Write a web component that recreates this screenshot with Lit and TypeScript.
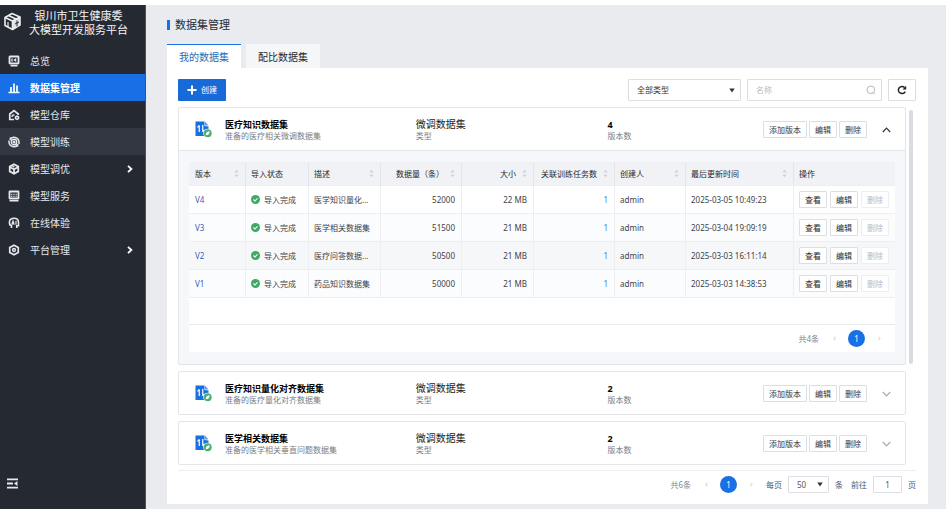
import { LitElement, html, css, svg, nothing, TemplateResult } from "lit";
import { customElement, property, state } from "lit/decorators.js";
import { classMap } from "lit/directives/class-map.js";

const base = css`
  *,
  *::before,
  *::after {
    box-sizing: border-box;
  }
  button,
  input,
  select {
    font: inherit;
    color: inherit;
    margin: 0;
  }
  svg {
    display: block;
    flex: none;
  }
  a {
    text-decoration: none;
  }
`;

const glyph = (body: TemplateResult, size = 12, box = 24) => html`
  <svg width=${size} height=${size} viewBox="0 0 ${box} ${box}" fill="none" stroke="currentColor" stroke-width="2.6" aria-hidden="true">${body}</svg>
`;

const navIcons: Record<string, TemplateResult> = {
  overview: svg`<rect x="3" y="3" width="18" height="14" rx="1" stroke-width="3.600"/><path d="M8 7v6.500" stroke-width="2.600"/><path d="M16.500 6v8L10.500 10z" fill="currentColor" stroke="none"/><path d="M5 21.500h14" stroke-width="3"/>`,
  data: svg`<path d="M6 20V10M12 20V3M18 20V7" stroke-width="3.400"/><path d="M1 21h22" stroke-width="3"/>`,
  store: svg`<path d="M12 21H3.500V10L12 3l8.500 7v2" stroke-width="3.400"/><path d="M8 16c0-3.500 3-5 5-3.500" stroke-width="2.800"/><path d="M18 12.500l4.500 2.500v5L18 22.500 13.500 20v-5z" fill="currentColor" stroke="none"/><circle cx="18" cy="17.500" r="1.300" fill="#252932" stroke="none"/>`,
  train: svg`<path d="M3.500 7.500A10 10 0 0 1 22 12v4M20.500 16.500A10 10 0 0 1 2 12V9" stroke-width="3"/><circle cx="12" cy="12" r="5.500" stroke-width="2.600"/><circle cx="12" cy="12" r="1.800" fill="currentColor"/><path d="M4 3l3 5.500M20 21l-3-5.500" stroke-width="2.600"/>`,
  tune: svg`<path d="M12 2.500l8.500 4.700v9.600L12 21.500l-8.500-4.700V7.200z" stroke-width="3.600"/><path d="M4 8.500l8 4.200 8-4.200M12 12.500V21" stroke-width="3.600"/><path d="M8.500 5l4 3.500" stroke-width="2.600"/>`,
  serve: svg`<rect x="3" y="3" width="18" height="14" rx="0.500" stroke-width="3.600"/><path d="M6 8.500h12M6 12.500h12" stroke-width="2.400" stroke-dasharray="3 1.500"/><path d="M3 21.500h18" stroke-width="3"/>`,
  chat: svg`<path d="M7 22v-4.500c-3.500-1-4.500-4.500-4-8C3.500 5 7 2.500 12 2.500S21 5.500 21 11v6.500h-3.500V22" stroke-width="3.200"/><path d="M7.500 15.500L10 8l2.500 7.500M8.500 13.500h3M16 7.500v8" stroke-width="2.400"/>`,
  admin: svg`<path d="M12 2.500l8.500 4.700v9.600L12 21.500l-8.500-4.700V7.200z" stroke-width="3.400"/><circle cx="12" cy="12" r="2.800" stroke-width="3"/>`,
};

const arrowDown = html`<svg class="caret" width="6" height="5" viewBox="0 0 6 5" aria-hidden="true"><path d="M0.300 0.500h5.400L3 4.500z" fill="#333"/></svg>`;

interface NavItem {
  icon: string;
  label: string;
  active?: boolean;
  hover?: boolean;
  sub?: boolean;
}

@customElement("side-nav")
class SideNav extends LitElement {
  static styles = [
    base,
    css`
      :host {
        display: flex;
        flex-direction: column;
        width: 146px;
        flex: none;
        background: #252932;
        color: #e6e8eb;
        border-right: 1px solid #4b5059;
      }
      .brand {
        display: flex;
        align-items: flex-start;
        gap: 8px;
        height: 42px;
        padding: 4px 4px 0;
        font-size: 11px;
        line-height: 14px;
        color: #f4f5f7;
      }
      .brand svg {
        margin-top: 3px;
      }
      .name {
        text-align: center;
        white-space: nowrap;
      }
      .item {
        display: flex;
        align-items: center;
        gap: 10px;
        height: 27px;
        padding: 0 12px 0 8px;
        font-size: 10px;
        color: inherit;
        white-space: nowrap;
      }
      .label {
        flex: 1;
      }
      .active {
        background: #186fe6;
        color: #fff;
        font-weight: 700;
      }
      .hover {
        background: #323741;
      }
      .fold {
        margin-top: auto;
        margin-bottom: 20px;
        padding: 0 7px;
        border: 0;
        background: none;
        align-self: flex-start;
        color: #e6e8eb;
      }
    `,
  ];

  private items: NavItem[] = [
    { icon: "overview", label: "总览" },
    { icon: "data", label: "数据集管理", active: true },
    { icon: "store", label: "模型仓库" },
    { icon: "train", label: "模型训练", hover: true },
    { icon: "tune", label: "模型调优", sub: true },
    { icon: "serve", label: "模型服务" },
    { icon: "chat", label: "在线体验" },
    { icon: "admin", label: "平台管理", sub: true },
  ];

  render() {
    return html`
      <div class="brand">
        <svg width="17" height="19" viewBox="0 0 34 38" fill="none" stroke="#eceef0" stroke-width="3.200" stroke-linejoin="round" aria-hidden="true">
          <path d="M17 18l15-7v15l-15 10z" fill="#dfe2e5" stroke="none" />
          <path d="M2 11L16 3l16 7v16l-15 9L2 27z" />
          <path d="M2 11l15 7 15-8M17 18v17M9 7l15 7" />
          <path d="M22 24l8-4M26 17v12" stroke="#252932" stroke-width="2" />
          <path d="M8 20v10" stroke-width="2.400" />
        </svg>
        <div class="name">银川市卫生健康委<br />大模型开发服务平台</div>
      </div>
      <nav>
        ${this.items.map(
          (i) => html`<a href="#" class=${classMap({ item: true, active: !!i.active, hover: !!i.hover })}>
            ${glyph(navIcons[i.icon])}
            <span class="label">${i.label}</span>
            ${i.sub
              ? html`<svg width="6" height="8" viewBox="0 0 6 8" fill="none" stroke="#fff" stroke-width="1.800" aria-hidden="true"><path d="M1 0.800L4.400 4 1 7.200" /></svg>`
              : nothing}
          </a>`
        )}
      </nav>
      <button class="fold" aria-label="收起菜单">
        <svg width="11" height="11" viewBox="0 0 11 11" stroke="currentColor" stroke-width="1.800" aria-hidden="true">
          <path d="M0 1.300h11M0 5.500h6M0 9.700h11" /><path d="M10.500 3v5L7 5.500z" fill="currentColor" stroke="none" />
        </svg>
      </button>
    `;
  }
}

@customElement("page-turner")
class PageTurner extends LitElement {
  @property({ type: Number }) total = 0;

  static styles = [
    base,
    css`
      :host {
        display: flex;
        align-items: center;
        color: #85888e;
      }
      .turn {
        width: 14px;
        height: 16px;
        padding: 0;
        border: 0;
        background: none;
        display: grid;
        place-items: center;
        color: #c3c6cb;
      }
      .total {
        margin-right: 8px;
      }
      .page {
        width: 17px;
        height: 17px;
        margin: 0 7px;
        padding: 0;
        border: 0;
        border-radius: 50%;
        background: #186fe6;
        color: #fff;
      }
    `,
  ];

  render() {
    return html`
      <span class="total">共${this.total}条</span>
      <button class="turn" aria-label="上一页" disabled>
        <svg width="3" height="5" viewBox="0 0 3 5" fill="none" stroke="currentColor"><path d="M2.500 0.800L1 2.500l1.500 1.700" /></svg>
      </button>
      <button class="page">1</button>
      <button class="turn" aria-label="下一页" disabled>
        <svg width="3" height="5" viewBox="0 0 3 5" fill="none" stroke="currentColor"><path d="M0.500 0.800L2 2.500 0.500 4.200" /></svg>
      </button>
    `;
  }
}

interface Version {
  name: string;
  desc: string;
  rows: number;
  size: string;
  time: string;
}

@customElement("version-table")
class VersionTable extends LitElement {
  @property({ attribute: false }) versions: Version[] = [];

  static styles = [
    base,
    css`
      :host {
        display: block;
        padding: 11px 10px 12px;
        background: #f5f7fa;
      }
      table {
        width: 100%;
        table-layout: fixed;
        border-collapse: separate;
        border-spacing: 0;
        background: #fff;
      }
      th,
      td {
        padding: 0 6px 0 5px;
        text-align: left;
        white-space: nowrap;
        font-weight: 400;
        border-left: 1px solid #eceef1;
        border-bottom: 1px solid #eceef2;
        color: #404349;
      }
      th {
        height: 24px;
        background: #f1f2f5;
        color: #26292f;
        border-left-color: #e4e6ea;
      }
      td {
        height: 28px;
      }
      th:first-child,
      td:first-child {
        border-left-color: transparent;
      }
      tr:nth-child(even) td {
        background: #fafcfd;
      }
      tr:nth-child(3) td {
        background: #f6f7f9;
      }
      .head {
        display: flex;
        align-items: center;
        justify-content: space-between;
      }
      .num .head {
        justify-content: flex-end;
        gap: 6px;
      }
      td.num {
        text-align: right;
      }
      .link {
        color: #3b5fb4;
      }
      .count {
        color: #4a78e0;
      }
      .status {
        display: flex;
        align-items: center;
        gap: 4px;
      }
      .ops {
        display: flex;
        gap: 3px;
      }
      .ops button {
        width: 28px;
        height: 17px;
        padding: 0;
        border: 1px solid #dcdee2;
        border-radius: 1px;
        background: #fff;
        color: #26292f;
      }
      .ops button:disabled {
        color: #b8bbc0;
        border-color: #eceef1;
      }
      .foot {
        display: flex;
        flex-direction: column;
        background: #fff;
      }
      .blank {
        height: 27px;
        border-bottom: 1px solid #e8eaed;
      }
      .bar {
        display: flex;
        justify-content: flex-end;
        align-items: center;
        height: 27px;
        padding-right: 9px;
      }
    `,
  ];

  private cols = [
    { t: "版本", w: 56, sort: true },
    { t: "导入状态", w: 63 },
    { t: "描述", w: 72, sort: true },
    { t: "数据量（条）", w: 81, sort: true, num: true },
    { t: "大小", w: 72, sort: true, num: true },
    { t: "关联训练任务数", w: 81, sort: true, num: true },
    { t: "创建人", w: 71, sort: true },
    { t: "最后更新时间", w: 108, sort: true },
    { t: "操作", w: 102 },
  ];

  render() {
    return html`
      <table>
        <colgroup>
          ${this.cols.map((c) => html`<col width=${c.w} />`)}
        </colgroup>
        <thead>
          <tr>
            ${this.cols.map(
              (c) => html`<th scope="col" class=${classMap({ num: !!c.num })}>
                <div class="head">
                  <span>${c.t}</span>
                  ${c.sort
                    ? html`<svg width="5" height="9" viewBox="0 0 5 9" fill="#cdd0d5" aria-hidden="true"><path d="M0.500 3.200L2.500 0.700l2 2.500zM0.500 5.800l2 2.500 2-2.500z" /></svg>`
                    : nothing}
                </div>
              </th>`
            )}
          </tr>
        </thead>
        <tbody>
          ${this.versions.map(
            (v) => html`<tr>
              <td><a class="link" href="#">${v.name}</a></td>
              <td>
                <span class="status">
                  <svg width="9" height="9" viewBox="0 0 18 18" aria-hidden="true"><circle cx="9" cy="9" r="9" fill="#43a866" /><path d="M5 9l3 3 5-5.500" fill="none" stroke="#fff" stroke-width="2.200" /></svg>
                  导入完成
                </span>
              </td>
              <td>${v.desc}</td>
              <td class="num">${v.rows}</td>
              <td class="num">${v.size}</td>
              <td class="num"><a class="count" href="#">1</a></td>
              <td>admin</td>
              <td>${v.time}</td>
              <td>
                <div class="ops"><button>查看</button><button>编辑</button><button disabled>删除</button></div>
              </td>
            </tr>`
          )}
        </tbody>
      </table>
      <div class="foot">
        <div class="blank"></div>
        <div class="bar"><page-turner total="4"></page-turner></div>
      </div>
    `;
  }
}

@customElement("dataset-card")
class DatasetCard extends LitElement {
  @property() name = "";
  @property() note = "";
  @property({ type: Number }) count = 0;
  @property({ attribute: false }) versions: Version[] = [];
  @state() private open = false;

  static styles = [
    base,
    css`
      :host {
        display: block;
        border: 1px solid #e3e5e9;
        border-radius: 2px;
        background: #fff;
      }
      .row {
        display: grid;
        grid-template-columns: 30px 190fr 191fr 155fr auto;
        align-items: center;
        height: 42px;
        padding: 1px 8px 0 16px;
      }
      .open {
        height: 43px;
        border-bottom: 1px solid #e3e5e9;
      }
      .cell {
        display: flex;
        flex-direction: column;
        color: #7b7e84;
        line-height: 11px;
        white-space: nowrap;
        min-width: 0;
      }
      .main {
        font-size: 10px;
        color: #1c1e22;
      }
      .title {
        font-size: 9px;
        font-weight: 700;
        color: #000;
      }
      .acts {
        display: flex;
        align-items: center;
        gap: 2px;
      }
      .acts button {
        height: 17px;
        padding: 0 5px;
        border: 1px solid #dcdee2;
        border-radius: 1px;
        background: #fff;
        color: #33363c;
        white-space: nowrap;
      }
      .acts .toggle {
        display: grid;
        place-items: center;
        border-color: transparent;
        background: none;
        margin-left: 7px;
        color: #a9acb2;
      }
      .open .toggle {
        color: #33363c;
      }
    `,
  ];

  willUpdate(changed: Map<string, unknown>) {
    if (changed.has("versions")) this.open = this.versions.length > 0;
  }

  render() {
    return html`
      <div class=${classMap({ row: true, open: this.open })}>
        <svg width="17" height="17" viewBox="0 0 34 34" aria-hidden="true">
          <path d="M1 1h18v9l8 1v19H1z" fill="#1a6fe0" />
          <path d="M20 1l7 8h-7z" fill="#5c9df0" />
          <path d="M8.500 9v13M5 13l3.500-4.500M15.500 8v13M19 17.500L15.500 22" stroke="#fff" stroke-width="2.400" fill="none" />
          <circle cx="25.500" cy="24.500" r="9" fill="#fff" />
          <circle cx="25.500" cy="24.500" r="7.800" fill="#4caf6e" />
          <path d="M21.500 28.500c0-5 3-8 8-8 0 5-3 8-8 8z" fill="#fff" />
        </svg>
        <div class="cell"><span class="title">${this.name}</span><span>${this.note}</span></div>
        <div class="cell"><span class="main">微调数据集</span><span>类型</span></div>
        <div class="cell"><span class="title">${this.count}</span><span>版本数</span></div>
        <div class="acts">
          <button>添加版本</button><button>编辑</button><button>删除</button>
          <button class="toggle" aria-label="展开或收起" aria-expanded=${this.open}>
            <svg width="9" height="6" viewBox="0 0 9 6" fill="none" stroke="currentColor" stroke-width="1.200">
              <path d=${this.open ? "M0.800 5L4.500 1.200 8.200 5" : "M0.800 1L4.500 4.800 8.200 1"} />
            </svg>
          </button>
        </div>
      </div>
      ${this.open ? html`<version-table .versions=${this.versions}></version-table>` : nothing}
    `;
  }
}

@customElement("app-root")
class AppRoot extends LitElement {
  static styles = [
    base,
    css`
      :host {
        display: flex;
        min-height: 100vh;
        border-top: 5px solid #fff;
        box-sizing: border-box;
        background: #e9ebef;
        font-family: "Noto Sans", "Noto Sans CJK SC", sans-serif;
        font-size: 8px;
        line-height: 12px;
        color: #33363c;
      }
      main {
        flex: 1;
        min-width: 0;
        display: flex;
        flex-direction: column;
        padding: 14px 18px 5px 21px;
      }
      h1 {
        display: flex;
        align-items: center;
        gap: 5px;
        margin: 0 0 13px;
        height: 12px;
        font-size: 11px;
        font-weight: 400;
        color: #26292f;
      }
      h1::before {
        content: "";
        width: 3px;
        height: 10px;
        background: #186fe6;
      }
      .tabs {
        display: flex;
        gap: 5px;
      }
      .tab {
        width: 74px;
        height: 24px;
        padding: 0;
        border: 0;
        border-top: 1px solid transparent;
        background: #f5f6f8;
        font-size: 10px;
        color: #26292f;
      }
      .current {
        background: #fff;
        border-top-color: #186fe6;
        color: #2e6bb5;
      }
      .panel {
        flex: 1;
        display: flex;
        flex-direction: column;
        padding: 11px 12px 11px 11px;
        background: #fff;
      }
      .tools {
        display: flex;
        gap: 6px;
        height: 22px;
      }
      .create {
        display: flex;
        align-items: center;
        gap: 4px;
        margin-right: auto;
        padding: 0 9px;
        border: 0;
        border-radius: 1px;
        background: #186ad8;
        color: #fff;
      }
      .pick,
      .search {
        position: relative;
        display: flex;
      }
      .pick {
        width: 113px;
      }
      .search {
        width: 135px;
      }
      select,
      input {
        appearance: none;
        width: 100%;
        padding: 0 8px;
        border: 1px solid #dcdee2;
        border-radius: 1px;
        background: #fff;
        outline: 0;
      }
      input::placeholder {
        color: #b8bbc0;
      }
      .caret,
      .lens {
        position: absolute;
        top: 0;
        bottom: 0;
        right: 6px;
        margin: auto 0;
        pointer-events: none;
      }
      .refresh {
        display: grid;
        place-items: center;
        width: 28px;
        padding: 0;
        border: 1px solid #dcdee2;
        border-radius: 1px;
        background: #fff;
      }
      .scroll {
        display: grid;
        grid-template-columns: 1fr 4px;
        column-gap: 3px;
        margin: 6px 3px 5px 0;
      }
      .list {
        display: flex;
        flex-direction: column;
        gap: 6px;
      }
      .thumb {
        height: 71%;
        margin-top: 3px;
        border-radius: 2px;
        background: #d9dce2;
      }
      .pager {
        display: flex;
        justify-content: flex-end;
        align-items: center;
        padding-top: 5px;
        border-top: 1px solid #eceef1;
        color: #55585e;
      }
      .pager label {
        display: flex;
        align-items: center;
        gap: 6px;
        margin-left: 8px;
      }
      .per {
        width: 41px;
        height: 17px;
      }
      .goto {
        width: 29px;
        height: 17px;
        padding: 0;
        text-align: center;
      }
    `,
  ];

  private versions: Version[] = [
    { name: "V4", desc: "医学知识量化...", rows: 52000, size: "22 MB", time: "2025-03-05 10:49:23" },
    { name: "V3", desc: "医学相关数据集", rows: 51500, size: "21 MB", time: "2025-03-04 19:09:19" },
    { name: "V2", desc: "医疗问答数据...", rows: 50500, size: "21 MB", time: "2025-03-03 16:11:14" },
    { name: "V1", desc: "药品知识数据集", rows: 50000, size: "21 MB", time: "2025-03-03 14:38:53" },
  ];

  render() {
    return html`
      <side-nav></side-nav>
      <main>
        <h1>数据集管理</h1>
        <div class="tabs" role="tablist">
          <button class="tab current" role="tab" aria-selected="true">我的数据集</button>
          <button class="tab" role="tab" aria-selected="false">配比数据集</button>
        </div>
        <section class="panel">
          <div class="tools">
            <button class="create">
              <svg width="10" height="10" viewBox="0 0 10 10" stroke="#fff" stroke-width="2" aria-hidden="true"><path d="M5 0.500v9M0.500 5h9" /></svg>
              创建
            </button>
            <div class="pick">
              <select aria-label="类型"><option>全部类型</option></select>
              ${arrowDown}
            </div>
            <div class="search">
              <input type="text" placeholder="名称" aria-label="名称" />
              <svg class="lens" width="10" height="10" viewBox="0 0 10 10" fill="none" stroke="#b4b7bc" aria-hidden="true"><circle cx="4.800" cy="4.800" r="3.800" /><path d="M7 7.400L8.800 9.300" /></svg>
            </div>
            <button class="refresh" aria-label="刷新">
              <svg width="10" height="10" viewBox="0 0 10 10" fill="none" stroke="#222" stroke-width="1.500" aria-hidden="true"><path d="M8.200 6.600A3.600 3.600 0 1 1 7.600 2.500" /><path d="M9.200 0.800v3.700H5.500z" fill="#222" stroke="none" /></svg>
            </button>
          </div>
          <div class="scroll">
            <div class="list">
              <dataset-card name="医疗知识数据集" note="准备的医疗相关微调数据集" count="4" .versions=${this.versions}></dataset-card>
              <dataset-card name="医疗知识量化对齐数据集" note="准备的医疗量化对齐数据集" count="2"></dataset-card>
              <dataset-card name="医学相关数据集" note="准备的医学相关垂直问题数据集" count="2"></dataset-card>
            </div>
            <div class="thumb"></div>
          </div>
          <div class="pager">
            <page-turner total="6"></page-turner>
            <label>每页
              <span class="pick per"><select><option>50</option></select>${arrowDown}</span>
              条</label>
            <label>前往 <input class="goto" type="text" value="1" /> 页</label>
          </div>
        </section>
      </main>
    `;
  }
}
